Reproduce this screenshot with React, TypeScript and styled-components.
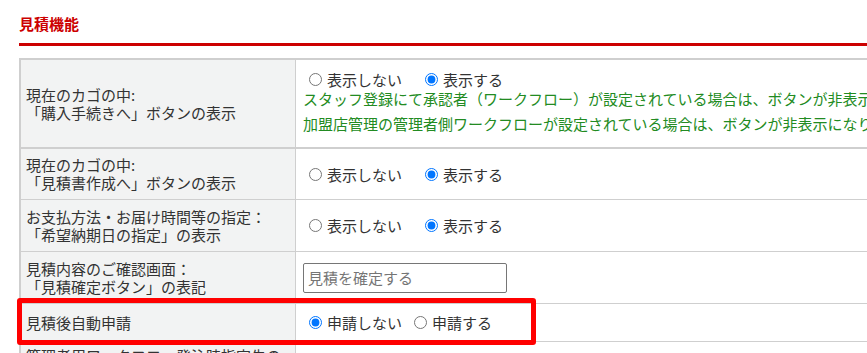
import React from "react";
import styled, { createGlobalStyle } from "styled-components";

const Global = createGlobalStyle`
  html, body { margin: 0; padding: 0; overflow: hidden; background: #fff; }
  body { font-family: "Noto Sans CJK JP", "Noto Sans", sans-serif; color: #333; }
`;

const Page = styled.div`
  padding-left: 19px;
  width: 1200px;
`;

const Title = styled.h2`
  margin: 14px 0 0;
  font-size: 15px;
  line-height: 20px;
  font-weight: 700;
  color: #cc0000;
  padding-bottom: 9px;
  border-bottom: 3px solid #cc0000;
`;

const TableWrap = styled.div`
  position: relative;
  margin-top: 12px;
`;

const Table = styled.div`
  border-left: 2px solid #cfcfcf;
  border-top: 2px solid #cfcfcf;
`;

const Row = styled.div<{ $h: number; $heavy?: boolean }>`
  display: grid;
  grid-template-columns: 275px 1fr;
  height: ${(p) => p.$h}px;
  border-bottom: ${(p) => (p.$heavy ? 2 : 1)}px solid #cfcfcf;
  box-sizing: content-box;
`;

const Label = styled.div`
  background: #f2f3f3;
  border-right: 1px solid #cfcfcf;
  padding: 0 5px;
  display: flex;
  flex-direction: column;
  justify-content: center;
  font-size: 15px;
  line-height: 18px;
  color: #333;
  white-space: nowrap;
  overflow: hidden;
`;

const Value = styled.div<{ $pb?: number }>`
  padding: 0 7px ${(p) => p.$pb ?? 0}px;
  display: flex;
  flex-direction: column;
  justify-content: center;
  font-size: 15px;
  color: #333;
  white-space: nowrap;
  overflow: hidden;
`;

const RadioGroup = styled.div<{ $gap: number }>`
  display: flex;
  align-items: center;
  gap: ${(p) => p.$gap}px;
  line-height: 19px;
`;

const Option = styled.label`
  display: inline-flex;
  align-items: center;
`;

const Radio = styled.input`
  width: 13px;
  height: 13px;
  margin: 0 5px 0 6px;
`;

const Note = styled.div<{ $mt?: number }>`
  color: #228b22;
  line-height: 19px;
  margin-top: ${(p) => p.$mt ?? 0}px;
`;

const TextInput = styled.input`
  width: 204px;
  height: 30px;
  box-sizing: border-box;
  border: 1px solid #767676;
  border-radius: 2px;
  padding: 0 4px;
  font-family: inherit;
  font-size: 15px;
  color: #333;
  &::placeholder { color: #757575; }
`;

const Highlight = styled.div`
  position: absolute;
  left: -2px;
  top: 240px;
  width: 519px;
  height: 47px;
  box-sizing: border-box;
  border: 5px solid #ff0000;
  border-radius: 3px;
  pointer-events: none;
`;

type Opt = { label: string; checked: boolean };

function Radios({ name, opts, gap }: { name: string; opts: Opt[]; gap: number }) {
  return (
    <RadioGroup $gap={gap}>
      {opts.map((o) => (
        <Option key={o.label}>
          <Radio type="radio" name={name} defaultChecked={o.checked} />
          {o.label}
        </Option>
      ))}
    </RadioGroup>
  );
}

const showOpts: Opt[] = [
  { label: "表示しない", checked: false },
  { label: "表示する", checked: true },
];

export default function App() {
  return (
    <Page>
      <Global />
      <Title>見積機能</Title>
      <TableWrap>
        <Table>
          <Row $h={87} $heavy>
            <Label>
              <span>現在のカゴの中:</span>
              <span>「購入手続きへ」ボタンの表示</span>
            </Label>
            <Value $pb={4}>
              <Radios name="r1" opts={showOpts} gap={17} />
              <Note>スタッフ登録にて承認者（ワークフロー）が設定されている場合は、ボタンが非表示になります。</Note>
              <Note $mt={6}>加盟店管理の管理者側ワークフローが設定されている場合は、ボタンが非表示になります。</Note>
            </Value>
          </Row>
          <Row $h={50}>
            <Label>
              <span>現在のカゴの中:</span>
              <span>「見積書作成へ」ボタンの表示</span>
            </Label>
            <Value>
              <Radios name="r2" opts={showOpts} gap={17} />
            </Value>
          </Row>
          <Row $h={51}>
            <Label>
              <span>お支払方法・お届け時間等の指定：</span>
              <span>「希望納期日の指定」の表示</span>
            </Label>
            <Value>
              <Radios name="r3" opts={showOpts} gap={17} />
            </Value>
          </Row>
          <Row $h={51}>
            <Label>
              <span>見積内容のご確認画面：</span>
              <span>「見積確定ボタン」の表記</span>
            </Label>
            <Value>
              <TextInput type="text" placeholder="見積を確定する" />
            </Value>
          </Row>
          <Row $h={37}>
            <Label>
              <span>見積後自動申請</span>
            </Label>
            <Value>
              <Radios
                name="r5"
                gap={6}
                opts={[
                  { label: "申請しない", checked: true },
                  { label: "申請する", checked: false },
                ]}
              />
            </Value>
          </Row>
          <Row $h={46}>
            <Label>
              <span>管理者用ワークフロー発注時指定先の</span>
              <span>表示</span>
            </Label>
            <Value />
          </Row>
        </Table>
        <Highlight />
      </TableWrap>
    </Page>
  );
}
